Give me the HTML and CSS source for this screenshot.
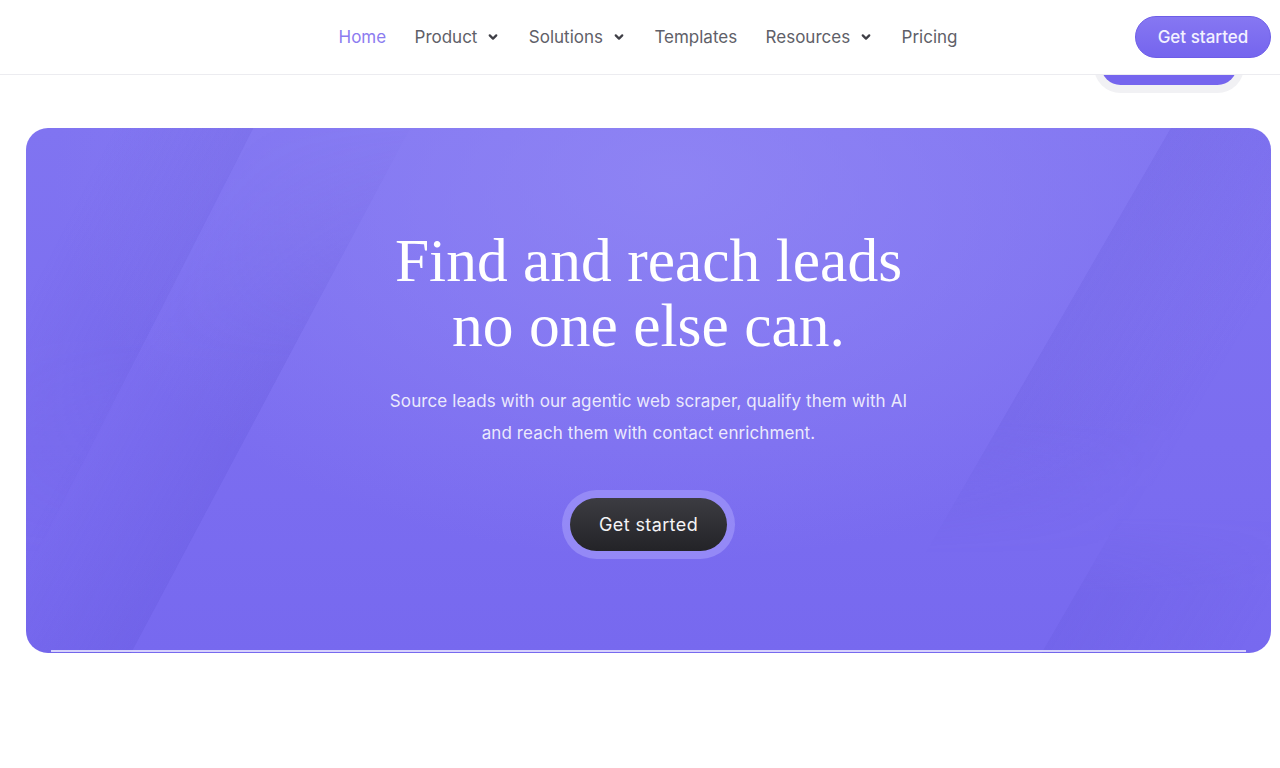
FILE: index.html
```html
<!DOCTYPE html>
<html lang="en">
<head>
<meta charset="utf-8">
<title>Find and reach leads</title>
<link rel="stylesheet" href="styles.css">
</head>
<body>
<div class="ghost-cta"><span class="ghost-inner"></span></div>
<header class="topbar">
  <nav class="nav">
    <a class="nav-link active" href="#">Home</a>
    <a class="nav-link" href="#">Product <svg class="chev" viewBox="0 0 12 12"><path d="M3.2 4.6 6 7.4 8.8 4.6"/></svg></a>
    <a class="nav-link" href="#">Solutions <svg class="chev" viewBox="0 0 12 12"><path d="M3.2 4.6 6 7.4 8.8 4.6"/></svg></a>
    <a class="nav-link" href="#">Templates</a>
    <a class="nav-link" href="#">Resources <svg class="chev" viewBox="0 0 12 12"><path d="M3.2 4.6 6 7.4 8.8 4.6"/></svg></a>
    <a class="nav-link" href="#">Pricing</a>
  </nav>
  <a class="cta-top" href="#">Get started</a>
</header>
<main class="main">
  <section class="hero">
    <div class="streak s1"></div>
    <div class="streak s3"></div>
    <div class="streak s2"></div>
    <div class="streak s4"></div>
    <div class="hero-content">
      <h1 class="hero-title">Find and reach leads<br>no one else can.</h1>
      <p class="hero-sub">Source leads with our agentic web scraper, qualify them with AI<br>and reach them with contact enrichment.</p>
      <div class="cta-ring"><a class="cta-dark" href="#">Get started</a></div>
    </div>
    <div class="hero-line"></div>
  </section>
</main>
</body>
</html>
```
FILE: styles.css
```css
* { box-sizing: border-box; }
html, body { margin: 0; padding: 0; background: #fff; }
body { font-family: Inter, "Noto Sans", sans-serif; width: 1280px; height: 768px; overflow: hidden; position: relative; }
a { text-decoration: none; }

.topbar {
  position: relative;
  z-index: 2;
  height: 75px;
  background: #fff;
  border-bottom: 1px solid #ececf0;
  display: flex;
  align-items: center;
  justify-content: center;
}
.nav { display: flex; align-items: center; gap: 28.4px; margin-left: 16px; }
.nav-link {
  font-size: 17px;
  color: #606068;
  display: flex;
  align-items: center;
  gap: 9px;
}
.nav-link.active { color: #8c7cf0; }
.chev { width: 14px; height: 14px; fill: none; stroke: #3f3f46; stroke-width: 1.9; stroke-linecap: round; stroke-linejoin: round; }

.cta-top {
  position: absolute;
  right: 9px;
  top: 16px;
  height: 42px;
  width: 136px;
  border-radius: 21px;
  background: linear-gradient(180deg, #8677f2 0%, #7565ee 100%);
  border: 1px solid #6d5de8;
  color: #f3f1ff;
  font-size: 17px;
  font-weight: 500;
  display: flex;
  align-items: center;
  justify-content: center;
}

.ghost-cta {
  position: absolute;
  z-index: 1;
  left: 1094px;
  top: 40px;
  width: 150px;
  height: 53px;
  border-radius: 27px;
  background: #f1f1f4;
  padding: 6px 7px;
}
.ghost-inner {
  display: block;
  height: 39px;
  border-radius: 20px;
  background: #7565ee;
}

.main { padding: 53px 9px 0 26px; }
.hero {
  position: relative;
  height: 525px;
  border-radius: 22px;
  overflow: hidden;
  background:
    radial-gradient(ellipse 620px 380px at 52% 10%, rgba(148,138,245,0.7) 0%, rgba(148,138,245,0) 100%),
    linear-gradient(180deg, #8074f1 0%, #7b6df0 60%, #7769ef 100%);
  display: flex;
  justify-content: center;
}
.streak { position: absolute; pointer-events: none; top: -10px; height: 545px; }
.s1 {
  left: 80px; width: 165px;
  background: linear-gradient(90deg, rgba(90,78,210,0) 0%, rgba(90,78,210,0.12) 60%, rgba(90,78,210,0.2) 100%);
  transform: skewX(-28deg);
  -webkit-mask-image: linear-gradient(180deg, transparent 0%, #000 45%, #000 100%);
  mask-image: linear-gradient(180deg, transparent 0%, #000 45%, #000 100%);
}
.s3 {
  left: -46px; width: 140px;
  background: linear-gradient(90deg, rgba(90,78,210,0) 0%, rgba(90,78,210,0.1) 70%, rgba(90,78,210,0.14) 100%);
  transform: skewX(-27deg);
  -webkit-mask-image: linear-gradient(180deg, #000 0%, #000 40%, transparent 80%);
  mask-image: linear-gradient(180deg, #000 0%, #000 40%, transparent 80%);
}
.s2 {
  left: 993px; width: 190px;
  background: linear-gradient(90deg, rgba(90,78,210,0.16) 0%, rgba(90,78,210,0.08) 55%, rgba(90,78,210,0) 100%);
  transform: skewX(-30deg);
  -webkit-mask-image: linear-gradient(180deg, #000 0%, #000 55%, transparent 80%);
  mask-image: linear-gradient(180deg, #000 0%, #000 55%, transparent 80%);
}
.s4 {
  top: 390px; height: 150px;
  left: 1050px; width: 200px;
  background: linear-gradient(90deg, rgba(90,78,210,0.14) 0%, rgba(90,78,210,0.06) 60%, rgba(90,78,210,0) 100%);
  transform: skewX(-30deg);
  -webkit-mask-image: linear-gradient(180deg, transparent 0%, #000 50%);
  mask-image: linear-gradient(180deg, transparent 0%, #000 50%);
}
.hero-content {
  position: relative;
  display: flex;
  flex-direction: column;
  align-items: center;
  padding-top: 100px;
  text-align: center;
}
.hero-title {
  margin: 0;
  font-family: "Liberation Serif", "DejaVu Serif", serif;
  font-weight: 400;
  font-size: 61.5px;
  line-height: 65px;
  color: #fff;
}
.hero-sub {
  margin: 27px 0 0;
  font-size: 17px;
  line-height: 32px;
  letter-spacing: 0.1px;
  color: rgba(255,255,255,0.86);
}
.cta-ring {
  margin-top: 41px;
  padding: 8px;
  border-radius: 36px;
  background: rgba(160,150,250,0.7);
}
.cta-dark {
  display: flex;
  align-items: center;
  justify-content: center;
  width: 157px;
  height: 53px;
  border-radius: 27px;
  background: linear-gradient(180deg, #3c3c42 0%, #232327 100%);
  color: #f4f4f6;
  font-size: 18px;
  font-weight: 400;
  letter-spacing: 0.4px;
}
.hero-line {
  position: absolute;
  left: 25px; right: 25px; bottom: 1px;
  height: 2px;
  background: rgba(230,228,255,0.85);
}
```
